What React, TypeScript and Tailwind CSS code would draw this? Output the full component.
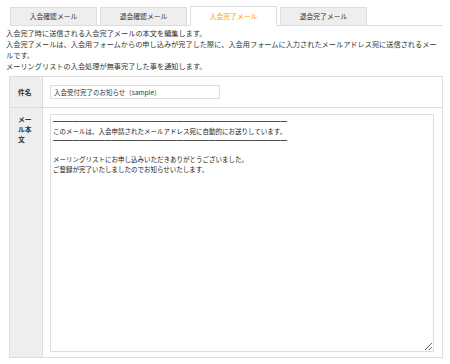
import { useState } from 'react'

const tabs = ['入会確認メール', '退会確認メール', '入会完了メール', '退会完了メール']

const rule = '━'.repeat(36)

const defaultBody = [
  rule,
  'このメールは、入会申請されたメールアドレス宛に自動的にお送りしています。',
  rule,
  '',
  'メーリングリストにお申し込みいただきありがとうございました。',
  'ご登録が完了いたしましたのでお知らせいたします。',
].join('\n')

export default function App() {
  const [active, setActive] = useState(2)
  const [subject, setSubject] = useState('入会受付完了のお知らせ（sample）')
  const [body, setBody] = useState(defaultBody)

  return (
    <div
      className="w-[450px] h-[364px] bg-white text-[#333] overflow-hidden"
      style={{ fontFamily: '"Noto Sans CJK JP", "Noto Sans", sans-serif' }}
    >
      {/* tabs */}
      <div className="ml-[10px] mr-[7px] pt-[7px] flex gap-[3px] border-b border-[#ddd]">
        {tabs.map((t, i) =>
          i === active ? (
            <button
              key={t}
              onClick={() => setActive(i)}
              className="w-[87px] h-[20px] -mt-[1px] -mb-px bg-white border border-[#ddd] border-b-white text-[6.8px] leading-[18px] text-[#f90]"
            >
              {t}
            </button>
          ) : (
            <button
              key={t}
              onClick={() => setActive(i)}
              className="w-[87px] h-[18px] bg-[#eee] border border-[#ddd] border-b-0 text-[6.8px] leading-[17px] text-[#333]"
            >
              {t}
            </button>
          )
        )}
      </div>

      {/* description */}
      <div className="mt-[2px] ml-[6px] w-[434px] text-[7.2px] leading-[11px]">
        <p>入会完了時に送信される入会完了メールの本文を編集します。</p>
        <p>入会完了メールは、入会用フォームからの申し込みが完了した際に、入会用フォームに入力されたメールアドレス宛に送信されるメールです。</p>
        <p>メーリングリストの入会処理が無事完了した事を通知します。</p>
      </div>

      {/* form */}
      <div className="mt-[4px] ml-[9px] w-[434px] border border-[#ddd] grid grid-cols-[33px_1fr]">
        <div className="bg-[#eee] border-r border-b border-[#ddd] h-[31px] pl-[8px] pr-[7px] flex items-center text-[6.8px] font-bold leading-[10px]">
          件名
        </div>
        <div className="border-b border-[#ddd] h-[31px] pl-[7px] flex items-center">
          <input
            value={subject}
            onChange={(e) => setSubject(e.target.value)}
            className="w-[170px] h-[14px] border border-[#ddd] px-[3px] text-[6.5px] outline-none"
          />
        </div>
        <div className="bg-[#eee] border-r border-[#ddd] h-[249px] pl-[8px] pr-[7px] pt-[6px] text-[6.8px] font-bold leading-[10px]">
          メール本文
        </div>
        <div className="h-[249px] pl-[7px] pr-[8px] pt-[6px] pb-[5px]">
          <textarea
            value={body}
            onChange={(e) => setBody(e.target.value)}
            className="block w-full h-full border border-[#ddd] px-[2px] pt-[2px] text-[6.5px] leading-[9.5px] text-[#222] outline-none whitespace-pre"
          />
        </div>
      </div>
    </div>
  )
}
